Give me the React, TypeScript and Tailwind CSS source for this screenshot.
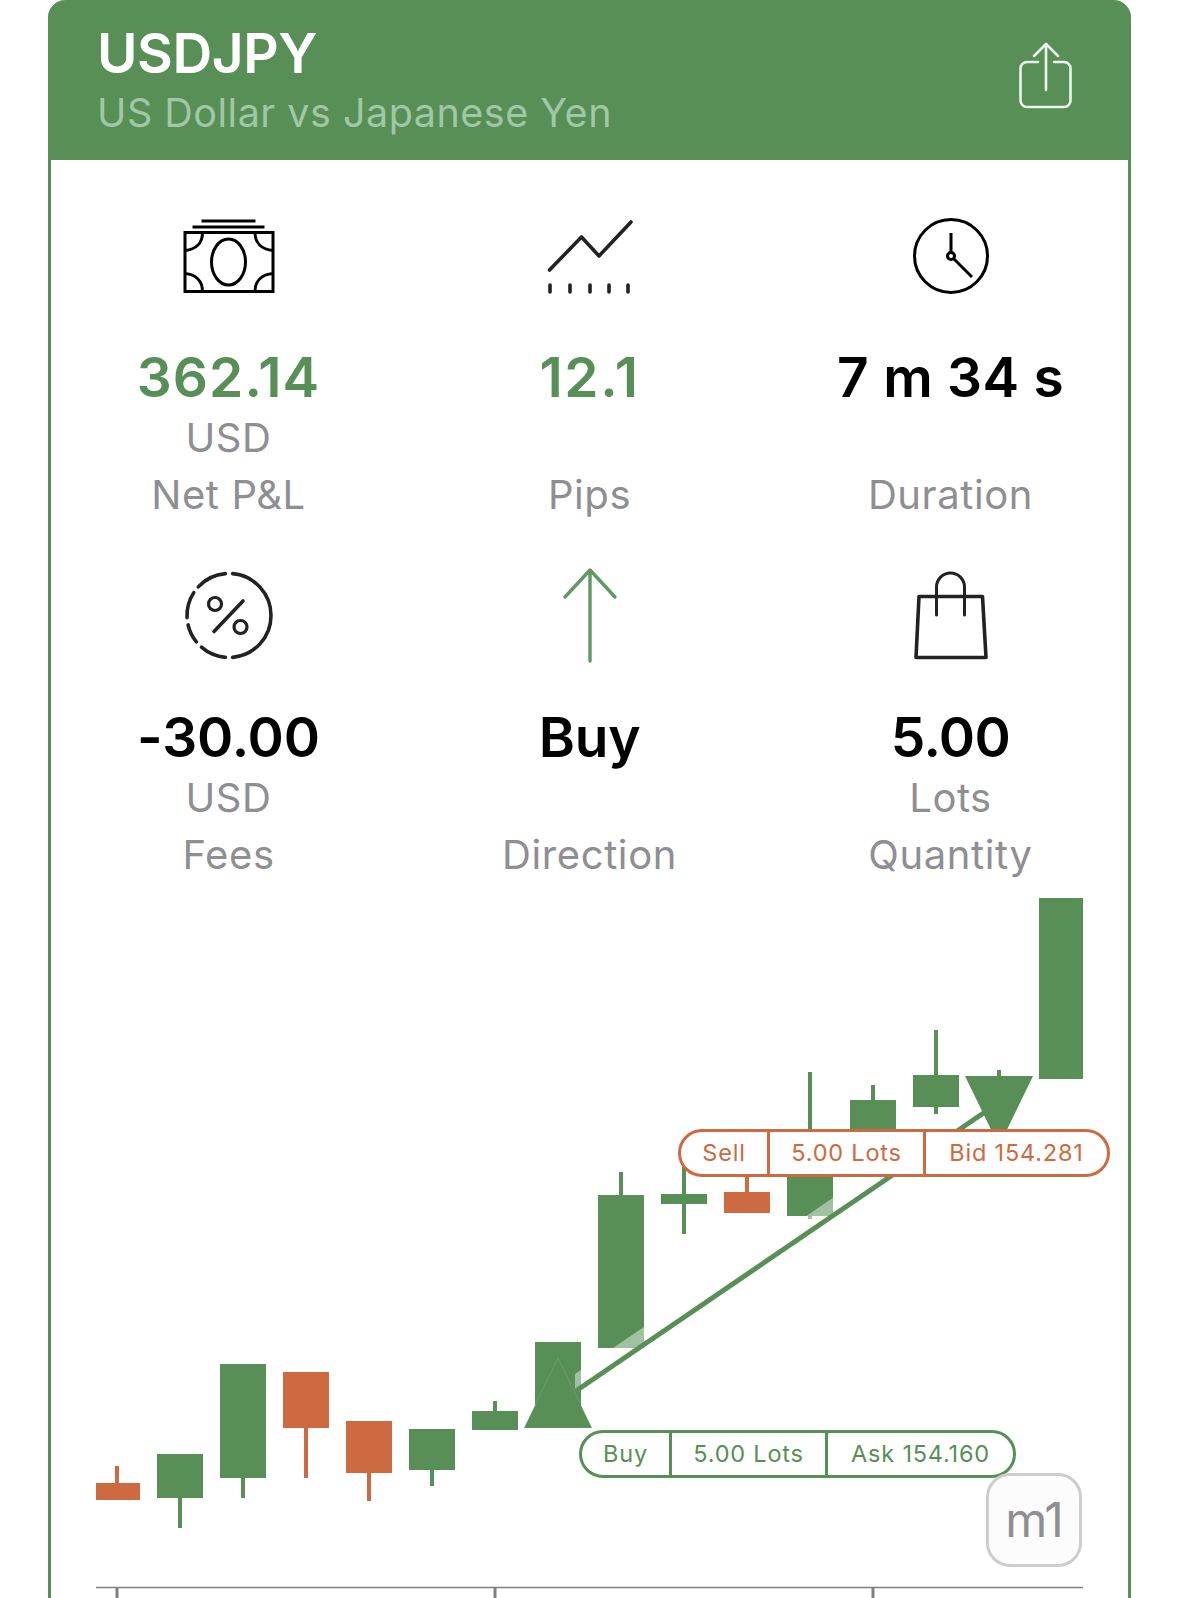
const GREEN = "#578f56";
const ORANGE = "#ce6a41";

// x, width, body top/bottom, wick top/bottom, in page coordinates
const candles = [
  { x: 96, w: 44, top: 1483, bottom: 1500, wickX: 117, wickTop: 1466, wickBottom: 1500, fill: ORANGE },
  { x: 157, w: 46, top: 1454, bottom: 1498, wickX: 180, wickTop: 1454, wickBottom: 1528, fill: GREEN },
  { x: 220, w: 46, top: 1364, bottom: 1478, wickX: 243, wickTop: 1364, wickBottom: 1498, fill: GREEN },
  { x: 283, w: 46, top: 1372, bottom: 1428, wickX: 306, wickTop: 1372, wickBottom: 1478, fill: ORANGE },
  { x: 346, w: 46, top: 1421, bottom: 1473, wickX: 369, wickTop: 1421, wickBottom: 1501, fill: ORANGE },
  { x: 409, w: 46, top: 1429, bottom: 1470, wickX: 432, wickTop: 1429, wickBottom: 1486, fill: GREEN },
  { x: 472, w: 46, top: 1411, bottom: 1430, wickX: 495, wickTop: 1401, wickBottom: 1430, fill: GREEN },
  { x: 535, w: 46, top: 1342, bottom: 1428, wickX: 558, wickTop: 1342, wickBottom: 1428, fill: GREEN },
  { x: 598, w: 46, top: 1195, bottom: 1348, wickX: 621, wickTop: 1172, wickBottom: 1348, fill: GREEN },
  { x: 661, w: 46, top: 1194, bottom: 1204, wickX: 684, wickTop: 1167, wickBottom: 1234, fill: GREEN },
  { x: 724, w: 46, top: 1192, bottom: 1213, wickX: 747, wickTop: 1170, wickBottom: 1213, fill: ORANGE },
  { x: 787, w: 46, top: 1150, bottom: 1216, wickX: 810, wickTop: 1072, wickBottom: 1219, fill: GREEN },
  { x: 850, w: 46, top: 1100, bottom: 1140, wickX: 873, wickTop: 1085, wickBottom: 1140, fill: GREEN },
  { x: 913, w: 46, top: 1075, bottom: 1107, wickX: 936, wickTop: 1030, wickBottom: 1114, fill: GREEN },
  { x: 976, w: 46, top: 1076, bottom: 1076, wickX: 999, wickTop: 1070, wickBottom: 1076, fill: GREEN },
  { x: 1039, w: 44, top: 898, bottom: 1079, wickX: 1061, wickTop: 898, wickBottom: 1079, fill: GREEN },
];

function arc(startDeg: number, endDeg: number) {
  const cx = 229;
  const cy = 615.5;
  const r = 42;
  const a = (startDeg * Math.PI) / 180;
  const b = (endDeg * Math.PI) / 180;
  const large = endDeg - startDeg > 180 ? 1 : 0;
  return `M${cx + r * Math.cos(a)} ${cy + r * Math.sin(a)}A${r} ${r} 0 ${large} 1 ${cx + r * Math.cos(b)} ${cy + r * Math.sin(b)}`;
}

function CashIcon() {
  return (
    <svg viewBox="179.5 206 100 100" className="h-[100px] w-[100px]" fill="none" stroke="#000" strokeWidth="3">
      <path d="M202 221h54M193 227h72" />
      <rect x="185.5" y="232.5" width="88" height="59" />
      <ellipse cx="229" cy="262" rx="17" ry="23" />
      <path d="M203 232.5c0 11-7 17-17.500 18M255.500 232.500c0 11 7 17 18 18M203 291.500c0-11-7-17-17.500-18M255.500 291.500c0-11 7-17 18-18" />
    </svg>
  );
}

function PipsIcon() {
  return (
    <svg viewBox="540 206 100 100" className="h-[100px] w-[100px]" fill="none" stroke="#222" strokeWidth="3.600" strokeLinecap="round" strokeLinejoin="round">
      <path d="M549.500 270 581.500 237 599 256 631 222" />
      <path d="M550 285v7M570 285v7M590 285v7M609 285v7M628 285v7" />
    </svg>
  );
}

function ClockIcon() {
  return (
    <svg viewBox="901 206 100 100" className="h-[100px] w-[100px]" fill="none" stroke="#000" strokeWidth="3">
      <circle cx="951" cy="256" r="36.500" />
      <path d="M951 233v19.500M953.500 258.500 972 277" />
      <circle cx="951" cy="256" r="3.500" />
    </svg>
  );
}

function PercentIcon() {
  return (
    <svg viewBox="179 566 100 100" className="h-[100px] w-[100px]" fill="none" stroke="#222" strokeWidth="3.600" strokeLinecap="round">
      <path d={arc(-85, 85)} />
      <path d={arc(95, 131)} />
      <path d={arc(141, 167)} />
      <path d={arc(177, 213)} />
      <path d={arc(223, 265)} />
      <circle cx="215" cy="604" r="6.500" strokeWidth="3.200" />
      <circle cx="240.500" cy="627" r="6.500" strokeWidth="3.200" />
      <path d="M243 601 214 631.500" />
    </svg>
  );
}

function ArrowIcon() {
  return (
    <svg viewBox="540 566 100 100" className="h-[100px] w-[100px]" fill="none" stroke="#5f9a62" strokeWidth="3.400" strokeLinecap="round" strokeLinejoin="round">
      <path d="M590 570.500V661M565 597l25-27 25 27" />
    </svg>
  );
}

function BagIcon() {
  return (
    <svg viewBox="901.5 566 100 100" className="h-[100px] w-[100px]" fill="none" stroke="#222" strokeWidth="3.600" strokeLinecap="round" strokeLinejoin="round">
      <path d="M919.500 596.500H983L986.500 657.500H916.500Z" />
      <path d="M937 615V587a14 14 0 0 1 28 0V615" strokeWidth="3" />
    </svg>
  );
}

function ShareIcon() {
  return (
    <svg viewBox="0 0 64 72" className="h-[72px] w-[64px]" fill="none" stroke="#eef4ee" strokeWidth="2.600" strokeLinecap="round" strokeLinejoin="round">
      <path d="M24 21H13a6.500 6.500 0 0 0-6.500 6.500v32a6.500 6.500 0 0 0 6.500 6.500h37a6.500 6.500 0 0 0 6.500-6.500v-32A6.500 6.500 0 0 0 50 21H40" />
      <path d="M32 49V3M20 15 32 3l12 12" />
    </svg>
  );
}

function Stat({ icon, value, unit, label, color = "text-black", tracking }: { icon: React.ReactNode; value: string; unit?: string; label: string; color?: string; tracking: string }) {
  return (
    <div className="flex h-[360px] flex-col items-center pt-[43px]">
      {icon}
      <div className={`mt-[39px] h-[64px] text-[55px] leading-[64px] font-semibold ${tracking} ${color}`}>{value}</div>
      <div className="h-[57px] text-[40px] leading-[57px] tracking-[0.5px] text-[#8e8e93]">{unit}</div>
      <div className="h-[57px] text-[40px] leading-[57px] tracking-[0.6px] text-[#8e8e93]">{label}</div>
    </div>
  );
}

function OrderPill({ cells, className, dividerClass }: { cells: { text: string; w: string }[]; className: string; dividerClass: string }) {
  return (
    <div className={`absolute flex h-[48px] items-center overflow-hidden rounded-full border-[3px] bg-white text-[23.5px] tracking-[0.8px] ${className}`}>
      {cells.map((c, i) => (
        <div key={c.text} className={`flex h-full items-center justify-center ${c.w} ${i > 0 ? `border-l-[3px] ${dividerClass}` : ""}`}>
          {c.text}
        </div>
      ))}
    </div>
  );
}

function Chart() {
  return (
    <div className="relative -mx-[3px] h-[715px]">
      <svg viewBox="48 883 1083 715" className="absolute inset-0 h-[715px] w-[1083px]">
        {candles.map((c) => (
          <g key={c.x} fill={c.fill}>
            <rect x={c.wickX - 2} y={c.wickTop} width="4" height={c.wickBottom - c.wickTop} />
            <rect x={c.x} y={c.top} width={c.w} height={c.bottom - c.top} />
          </g>
        ))}
        {/* pale band above the trade line */}
        <path d="M575 1392 985 1112V1094L575 1374Z" fill="#fff" fillOpacity="0.45" />
        <path d="M570 1395 985 1112" stroke={GREEN} strokeWidth="5" fill="none" />
        <path d="M558 1358 592 1428H524Z" fill={GREEN} stroke="#fff" strokeOpacity="0.15" strokeWidth="0.8" />
        <path d="M965 1076H1033L999 1146Z" fill={GREEN} />
        <path d="M96 1587.500H1083" stroke="#808080" strokeWidth="1.500" />
        <path d="M117 1587V1598M495 1587V1598M873 1587V1598" stroke="#808080" strokeWidth="3" />
      </svg>
      <OrderPill
        className="top-[246px] left-[630px] border-[#ce6a41] text-[#ce6a41]"
        dividerClass="border-[#ce6a41]"
        cells={[
          { text: "Sell", w: "w-[86px]" },
          { text: "5.00 Lots", w: "w-[156px]" },
          { text: "Bid 154.281", w: "w-[184px]" },
        ]}
      />
      <OrderPill
        className="top-[547px] left-[531px] border-[#578f56] text-[#578f56]"
        dividerClass="border-[#578f56]"
        cells={[
          { text: "Buy", w: "w-[87px]" },
          { text: "5.00 Lots", w: "w-[156px]" },
          { text: "Ask 154.160", w: "w-[188px]" },
        ]}
      />
      <div className="absolute top-[590px] left-[938px] flex h-[94px] w-[96px] items-center justify-center rounded-[24px] border-[3px] border-[#cdcdcd] bg-[#fcfcfc] text-[48px] tracking-[-1px] text-[#8e8e93]">
        m1
      </div>
    </div>
  );
}

export default function App() {
  return (
    <div className="h-[1598px] w-[1179px] overflow-hidden bg-white pl-[48px] font-['Inter',sans-serif]">
      <div className="w-[1083px] rounded-t-[18px] border-x-[3px] border-[#578f56]">
        <header className="-mx-[3px] flex h-[160px] items-start justify-between rounded-t-[18px] bg-[#578f56] pt-[21px] pr-[53px] pl-[49px]">
          <div>
            <h1 className="text-[55px] leading-[64px] font-semibold tracking-[-0.4px] text-white">USDJPY</h1>
            <p className="mt-[5px] text-[39.5px] leading-[46px] tracking-[0.5px] text-[#a0c8a4]">US Dollar vs Japanese Yen</p>
          </div>
          <div className="mt-[20px]">
            <ShareIcon />
          </div>
        </header>
        <div className="-mx-[3px] grid grid-cols-3 pt-[3px]">
          <Stat icon={<CashIcon />} value="362.14" unit="USD" label="Net P&L" color="text-[#578f56]" tracking="tracking-[1.1px]" />
          <Stat icon={<PipsIcon />} value="12.1" label="Pips" color="text-[#578f56]" tracking="tracking-[1.7px]" />
          <Stat icon={<ClockIcon />} value="7 m 34 s" label="Duration" tracking="tracking-[0.3px]" />
          <Stat icon={<PercentIcon />} value="-30.00" unit="USD" label="Fees" tracking="tracking-[-0.1px]" />
          <Stat icon={<ArrowIcon />} value="Buy" label="Direction" tracking="tracking-[-0.3px]" />
          <Stat icon={<BagIcon />} value="5.00" unit="Lots" label="Quantity" tracking="tracking-[-0.6px]" />
        </div>
        <Chart />
      </div>
    </div>
  );
}
